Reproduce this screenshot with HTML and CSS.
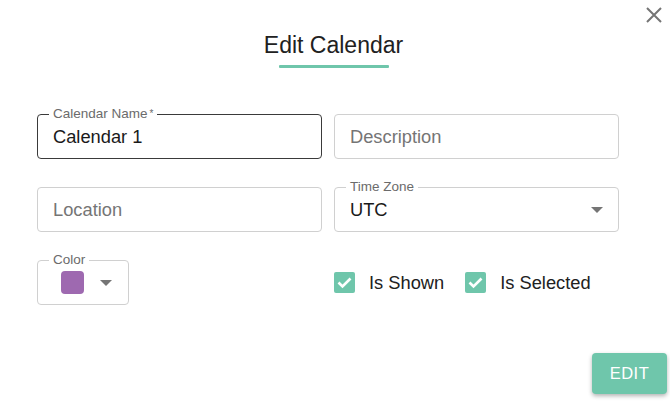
FILE: index.html
```html
<!DOCTYPE html>
<html>
<head>
<meta charset="utf-8">
<link rel="stylesheet" href="styles.css">
</head>
<body>
<div class="dialog">
  <button class="close" aria-label="Close">
    <svg width="16" height="16" viewBox="0 0 16 16"><path d="M1 1L15 15M15 1L1 15" stroke="#757575" stroke-width="2" fill="none"/></svg>
  </button>
  <div class="header">
    <h1 class="title">Edit Calendar</h1>
    <div class="underline"></div>
  </div>
  <div class="form">
    <div class="field focused">
      <span class="label">Calendar Name<span class="req">*</span></span>
      <span class="value">Calendar 1</span>
    </div>
    <div class="field">
      <span class="placeholder">Description</span>
    </div>
    <div class="field">
      <span class="placeholder">Location</span>
    </div>
    <div class="field select">
      <span class="label">Time Zone</span>
      <span class="value">UTC</span>
      <span class="arrow"></span>
    </div>
    <div class="cell">
      <div class="field color">
        <span class="label">Color</span>
        <span class="swatch"></span>
        <span class="arrow"></span>
      </div>
    </div>
    <div class="checks">
      <label class="check"><span class="box"><svg width="21" height="21" viewBox="0 0 21 21"><path d="M4.5 10.5L8.5 14.5L16.5 6.5" stroke="#fff" stroke-width="2.6" fill="none"/></svg></span>Is Shown</label>
      <label class="check"><span class="box"><svg width="21" height="21" viewBox="0 0 21 21"><path d="M4.5 10.5L8.5 14.5L16.5 6.5" stroke="#fff" stroke-width="2.6" fill="none"/></svg></span>Is Selected</label>
    </div>
  </div>
  <div class="actions">
    <button class="edit">EDIT</button>
  </div>
</div>
</body>
</html>
```

FILE: styles.css
```css
html, body {
  margin: 0;
  padding: 0;
  background: #fff;
}
body {
  font-family: "Liberation Sans", Arial, sans-serif;
  color: #212121;
}
.dialog {
  position: relative;
  width: 670px;
  height: 403px;
  box-sizing: border-box;
  padding-top: 32px;
}
.close {
  position: absolute;
  top: 7px;
  right: 8px;
  width: 16px;
  height: 16px;
  padding: 0;
  border: none;
  background: none;
  display: block;
}
.close svg { display: block; }
.header {
  display: flex;
  flex-direction: column;
  align-items: center;
  width: 667px;
}
.title {
  margin: 0;
  font-size: 23px;
  line-height: 26px;
  font-weight: 400;
  color: #212121;
}
.underline {
  margin-top: 7px;
  width: 110px;
  height: 3px;
  background: #6fc6ab;
  border-radius: 1px;
}
.form {
  margin-top: 46px;
  margin-left: 37px;
  display: grid;
  grid-template-columns: 285px 285px;
  column-gap: 12px;
  row-gap: 28px;
}
.field {
  position: relative;
  height: 45px;
  box-sizing: border-box;
  border: 1px solid #d0d0d0;
  border-radius: 4px;
  display: flex;
  align-items: center;
  padding-left: 15px;
  font-size: 18.3px;
}
.field.focused {
  border-color: #3a3a3a;
}
.label {
  position: absolute;
  top: -8px;
  left: 11px;
  padding: 0 4px;
  background: #fff;
  font-size: 13.5px;
  line-height: 14px;
  color: #6b6b6b;
}
.req {
  font-size: 10px;
  vertical-align: top;
  margin-left: 2px;
}
.value { color: #1a1a1a; }
.placeholder { color: #757575; }
.select .arrow, .color .arrow {
  width: 0;
  height: 0;
  border-left: 6px solid transparent;
  border-right: 6px solid transparent;
  border-top: 6px solid #757575;
}
.select { justify-content: space-between; padding-right: 15px; }
.cell { display: flex; }
.field.color {
  width: 92px;
  padding-left: 23px;
  gap: 16px;
}
.swatch {
  width: 23px;
  height: 23px;
  border-radius: 4px;
  background: #9e69b0;
}
.checks {
  display: flex;
  align-items: center;
  gap: 21px;
}
.check {
  display: flex;
  align-items: center;
  gap: 14px;
  font-size: 18.3px;
  color: #212121;
}
.box {
  width: 21px;
  height: 21px;
  border-radius: 2px;
  background: #6fc6ab;
  display: block;
}
.box svg { display: block; }
.actions {
  display: flex;
  justify-content: flex-end;
  padding-right: 3px;
  margin-top: 48px;
}
.edit {
  width: 75px;
  height: 41px;
  border: none;
  border-radius: 4px;
  background: #6fc6ab;
  color: #fff;
  font-family: "Liberation Sans", Arial, sans-serif;
  font-size: 16.5px;
  letter-spacing: 0.5px;
  box-shadow: 0 2px 4px rgba(0,0,0,0.3);
  padding: 0;
}
```
